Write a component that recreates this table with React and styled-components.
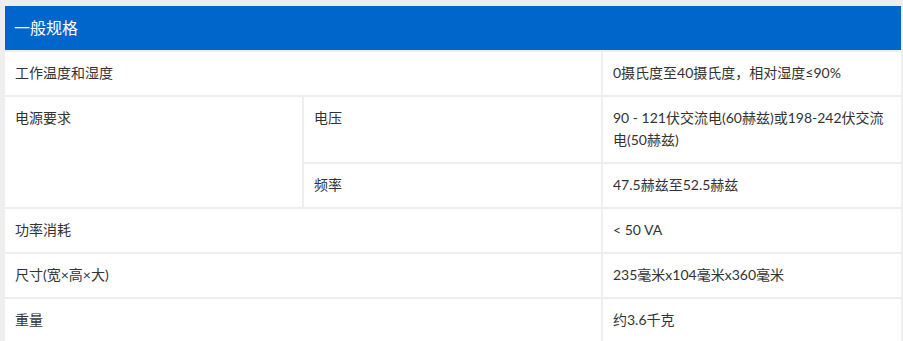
import React from "react";
import styled, { createGlobalStyle } from "styled-components";

const Global = createGlobalStyle`
  html, body { margin: 0; padding: 0; background: #eeeeee; }
  body { font-family: Lato, "Noto Sans CJK SC", sans-serif; }
`;

const Wrap = styled.div`
  padding: 4px 0 0 3px;
  background: #eeeeee;
`;

const Table = styled.table`
  width: 900px;
  table-layout: fixed;
  border-collapse: separate;
  border-spacing: 2px;
  background: #eeeeee;
  font-size: 14px;
  color: #333333;
`;

const HeadCell = styled.th`
  background: #0066cc;
  color: #ffffff;
  font-size: 16px;
  font-weight: 400;
  text-align: left;
  height: 44px;
  padding: 0 9px;
  box-sizing: border-box;
  line-height: 22px;
`;

const Cell = styled.td`
  background: #ffffff;
  padding: 10px 10px 11px;
  line-height: 22px;
  vertical-align: top;
  text-align: left;
  word-break: break-all;
`;

const rows = [
  { label: "工作温度和湿度", value: "0摄氏度至40摄氏度，相对湿度≤90%" },
  {
    label: "电源要求",
    sub: [
      { label: "电压", value: "90 - 121伏交流电(60赫兹)或198-242伏交流电(50赫兹)" },
      { label: "频率", value: "47.5赫兹至52.5赫兹" },
    ],
  },
  { label: "功率消耗", value: "< 50 VA" },
  { label: "尺寸(宽×高×大)", value: "235毫米x104毫米x360毫米" },
  { label: "重量", value: "约3.6千克" },
];

export default function App() {
  return (
    <>
      <Global />
      <Wrap>
        <Table>
          <colgroup>
            <col style={{ width: 297 }} />
            <col style={{ width: 297 }} />
            <col style={{ width: 298 }} />
          </colgroup>
          <thead>
            <tr>
              <HeadCell colSpan={3}>一般规格</HeadCell>
            </tr>
          </thead>
          <tbody>
            {rows.map((r) =>
              r.sub ? (
                r.sub.map((s, i) => (
                  <tr key={r.label + s.label}>
                    {i === 0 && <Cell rowSpan={r.sub.length}>{r.label}</Cell>}
                    <Cell>{s.label}</Cell>
                    <Cell>{s.value}</Cell>
                  </tr>
                ))
              ) : (
                <tr key={r.label}>
                  <Cell colSpan={2}>{r.label}</Cell>
                  <Cell>{r.value}</Cell>
                </tr>
              )
            )}
          </tbody>
        </Table>
      </Wrap>
    </>
  );
}
